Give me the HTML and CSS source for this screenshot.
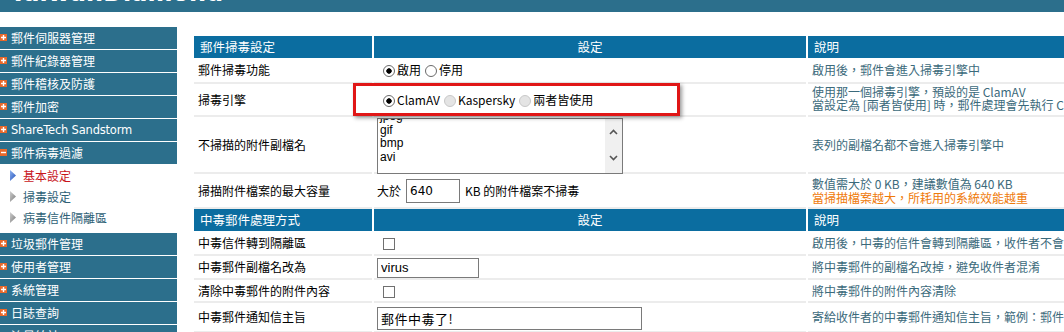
FILE: index.html
```html
<!DOCTYPE html>
<html lang="zh-Hant">
<head>
<meta charset="utf-8">
<title>郵件病毒過濾 - 基本設定</title>
<link rel="stylesheet" href="styles.css">
</head>
<body>
<div class="topbar"><div class="brand">TaiwanDiamond</div></div>
<div class="layout">
  <nav class="sidebar">
    <div class="menu-item"><svg class="ico" width="7" height="7" viewBox="0 0 7 7"><rect width="7" height="7" fill="#e8692b"/><path d="M1 3.5H6M3.5 1V6" stroke="#fff" stroke-width="1.4"/></svg><span>郵件伺服器管理</span></div>
    <div class="menu-item"><svg class="ico" width="7" height="7" viewBox="0 0 7 7"><rect width="7" height="7" fill="#e8692b"/><path d="M1 3.5H6M3.5 1V6" stroke="#fff" stroke-width="1.4"/></svg><span>郵件紀錄器管理</span></div>
    <div class="menu-item"><svg class="ico" width="7" height="7" viewBox="0 0 7 7"><rect width="7" height="7" fill="#e8692b"/><path d="M1 3.5H6M3.5 1V6" stroke="#fff" stroke-width="1.4"/></svg><span>郵件稽核及防護</span></div>
    <div class="menu-item"><svg class="ico" width="7" height="7" viewBox="0 0 7 7"><rect width="7" height="7" fill="#e8692b"/><path d="M1 3.5H6M3.5 1V6" stroke="#fff" stroke-width="1.4"/></svg><span>郵件加密</span></div>
    <div class="menu-item"><svg class="ico" width="7" height="7" viewBox="0 0 7 7"><rect width="7" height="7" fill="#e8692b"/><path d="M1 3.5H6M3.5 1V6" stroke="#fff" stroke-width="1.4"/></svg><span class="latin">ShareTech Sandstorm</span></div>
    <div class="menu-item"><svg class="ico" width="7" height="7" viewBox="0 0 7 7"><rect width="7" height="7" fill="#e8692b"/><path d="M1 3.5H6" stroke="#fff" stroke-width="1.4"/></svg><span>郵件病毒過濾</span></div>
    <ul class="submenu">
      <li class="sub active"><svg class="tri" width="6" height="11" viewBox="0 0 6 11"><defs><linearGradient id="gb" x1="0" y1="0" x2="1" y2="1"><stop offset="0" stop-color="#8fb3f0"/><stop offset="1" stop-color="#1f4fb8"/></linearGradient></defs><polygon points="0,0 6,5.5 0,11" fill="url(#gb)"/></svg><span>基本設定</span></li>
      <li class="sub"><svg class="tri" width="6" height="11" viewBox="0 0 6 11"><defs><linearGradient id="gg" x1="0" y1="0" x2="1" y2="1"><stop offset="0" stop-color="#d0d0d0"/><stop offset="1" stop-color="#7a7a7a"/></linearGradient></defs><polygon points="0,0 6,5.5 0,11" fill="url(#gg)"/></svg><span>掃毒設定</span></li>
      <li class="sub"><svg class="tri" width="6" height="11" viewBox="0 0 6 11"><polygon points="0,0 6,5.5 0,11" fill="url(#gg)"/></svg><span>病毒信件隔離區</span></li>
    </ul>
    <div class="menu-item"><svg class="ico" width="7" height="7" viewBox="0 0 7 7"><rect width="7" height="7" fill="#e8692b"/><path d="M1 3.5H6M3.5 1V6" stroke="#fff" stroke-width="1.4"/></svg><span>垃圾郵件管理</span></div>
    <div class="menu-item"><svg class="ico" width="7" height="7" viewBox="0 0 7 7"><rect width="7" height="7" fill="#e8692b"/><path d="M1 3.5H6M3.5 1V6" stroke="#fff" stroke-width="1.4"/></svg><span>使用者管理</span></div>
    <div class="menu-item"><svg class="ico" width="7" height="7" viewBox="0 0 7 7"><rect width="7" height="7" fill="#e8692b"/><path d="M1 3.5H6M3.5 1V6" stroke="#fff" stroke-width="1.4"/></svg><span>系統管理</span></div>
    <div class="menu-item"><svg class="ico" width="7" height="7" viewBox="0 0 7 7"><rect width="7" height="7" fill="#e8692b"/><path d="M1 3.5H6M3.5 1V6" stroke="#fff" stroke-width="1.4"/></svg><span>日誌查詢</span></div>
    <div class="menu-item"><svg class="ico" width="7" height="7" viewBox="0 0 7 7"><rect width="7" height="7" fill="#e8692b"/><path d="M1 3.5H6M3.5 1V6" stroke="#fff" stroke-width="1.4"/></svg><span>流量統計</span></div>
  </nav>

  <main class="content">
    <div class="cfg">
      <div class="th th-left">郵件掃毒設定</div>
      <div class="th th-center">設定</div>
      <div class="th th-left">說明</div>

      <div class="c lbl">郵件掃毒功能</div>
      <div class="c set"><input class="radio first" type="radio" name="scan" checked><span>啟用</span><input class="radio" type="radio" name="scan"><span>停用</span></div>
      <div class="c desc"><span>啟用後，郵件會進入掃毒引擎中</span></div>

      <div class="c lbl">掃毒引擎</div>
      <div class="c set rel"><input class="radio first" type="radio" name="eng" checked><span>ClamAV</span><input class="radio" type="radio" name="eng" disabled><span>Kaspersky</span><input class="radio" type="radio" name="eng" disabled><span>兩者皆使用</span><div class="highlight"></div></div>
      <div class="c desc tight"><span>使用那一個掃毒引擎，預設的是 ClamAV</span><span>當設定為 [兩者皆使用] 時，郵件處理會先執行 ClamAV 再執行 Kaspersky</span></div>

      <div class="c lbl">不掃描的附件副檔名</div>
      <div class="c set">
        <div class="ta">
          <div class="ta-text"><div>jpeg</div><div>gif</div><div>bmp</div><div>avi</div></div>
          <div class="ta-bar">
            <svg width="9" height="6" viewBox="0 0 9 6"><polyline points="1,5 4.5,1.5 8,5" fill="none" stroke="#555" stroke-width="1.6"/></svg>
            <svg width="9" height="6" viewBox="0 0 9 6"><polyline points="1,1 4.5,4.5 8,1" fill="none" stroke="#555" stroke-width="1.6"/></svg>
          </div>
        </div>
      </div>
      <div class="c desc"><span>表列的副檔名都不會進入掃毒引擎中</span></div>

      <div class="c lbl">掃描附件檔案的最大容量</div>
      <div class="c set"><span>大於</span><input class="inp inp-size" type="text" value="640"><span>KB 的附件檔案不掃毒</span></div>
      <div class="c desc loose"><span>數值需大於 0 KB，建議數值為 640 KB</span><span class="warn">當掃描檔案越大，所耗用的系統效能越重</span></div>

      <div class="th th-left">中毒郵件處理方式</div>
      <div class="th th-center">設定</div>
      <div class="th th-left">說明</div>

      <div class="c lbl">中毒信件轉到隔離區</div>
      <div class="c set"><input class="chk" type="checkbox"></div>
      <div class="c desc"><span>啟用後，中毒的信件會轉到隔離區，收件者不會收到該信件</span></div>

      <div class="c lbl">中毒郵件副檔名改為</div>
      <div class="c set"><input class="inp inp-ext" type="text" value="virus"></div>
      <div class="c desc"><span>將中毒郵件的副檔名改掉，避免收件者混淆</span></div>

      <div class="c lbl">清除中毒郵件的附件內容</div>
      <div class="c set"><input class="chk" type="checkbox"></div>
      <div class="c desc"><span>將中毒郵件的附件內容清除</span></div>

      <div class="c lbl">中毒郵件通知信主旨</div>
      <div class="c set"><input class="inp inp-subj" type="text" value="郵件中毒了!"></div>
      <div class="c desc"><span>寄給收件者的中毒郵件通知信主旨，範例：郵件中毒了!</span></div>
    </div>
  </main>
</div>
</body>
</html>
```

FILE: styles.css
```css
html, body {
  margin: 0;
  padding: 0;
}
body {
  width: 1064px;
  height: 332px;
  overflow: hidden;
  background: #fff;
  font-family: "Noto Sans CJK TC", "Noto Sans", sans-serif;
  font-size: 12px;
  color: #000;
}

/* top bar */
.topbar {
  height: 12px;
  background: #2c6f8c;
  overflow: hidden;
}
.brand {
  margin-top: -19px;
  padding-left: 10px;
  font-family: "DejaVu Sans", sans-serif;
  font-weight: bold;
  font-size: 24px;
  line-height: 24px;
  color: #fff;
  white-space: nowrap;
}

.layout {
  display: flex;
  align-items: flex-start;
}

/* sidebar */
.sidebar {
  width: 177px;
  flex: none;
  margin-top: 15px;
}
.menu-item {
  height: 22px;
  margin-bottom: 1px;
  background: #2c6f8c;
  color: #fff;
  display: flex;
  align-items: center;
  line-height: 14px;
  white-space: nowrap;
}
.menu-item .ico {
  flex: none;
  margin: -2px 4px 0 0;
}
.menu-item .latin {
  font-family: "DejaVu Sans", sans-serif;
  font-size: 11.5px;
  letter-spacing: -0.2px;
}
.submenu {
  list-style: none;
  margin: 0 0 1px;
  padding: 0 0 4px;
}
.sub {
  height: 21px;
  display: flex;
  align-items: center;
  padding-left: 10px;
  color: #2e6176;
  line-height: 14px;
  white-space: nowrap;
}
.sub .tri {
  flex: none;
  margin-right: 7px;
}
.sub.active {
  color: #c8151b;
}

/* main config grid */
.content {
  margin-left: 17px;
  margin-top: 24px;
}
.cfg {
  display: grid;
  grid-template-columns: 178px 432px 600px;
  grid-template-rows: 22px 26px 33px 57px 35px 22px 25px 24px 23px 30px;
  column-gap: 2px;
}
.th {
  background: #0b6da0;
  color: #fff;
  display: flex;
  align-items: center;
  font-size: 12.5px;
  line-height: 14px;
  white-space: nowrap;
}
.th-left {
  padding-left: 6px;
}
.th-center {
  justify-content: center;
}
.c {
  display: flex;
  align-items: center;
  box-sizing: border-box;
  border-bottom: 2px solid #ececec;
  line-height: 14px;
  white-space: nowrap;
}
.lbl {
  padding-left: 4px;
}
.set {
  padding-left: 3px;
}
.rel {
  position: relative;
}
.desc {
  padding-left: 4px;
  color: #3b6a7b;
  flex-direction: column;
  align-items: flex-start;
  justify-content: center;
  overflow: hidden;
}
.desc.tight {
  line-height: 13px;
  padding-bottom: 4px;
}
.desc.loose {
  line-height: 14px;
}
.warn {
  color: #ef7a0a;
}

/* radios */
.radio {
  appearance: none;
  -webkit-appearance: none;
  box-sizing: border-box;
  width: 12px;
  height: 12px;
  margin: 2px 2px 0 4px;
  border: 1px solid #6a6a6a;
  border-radius: 50%;
  background: #fff;
  flex: none;
}
.radio.first {
  margin-left: 6px;
}
.radio:checked {
  background: radial-gradient(circle, #000 0, #000 2.4px, #fff 3px);
}
.radio:disabled {
  border-color: #c8c8c8;
  background: #e4e4e4;
}

/* checkbox */
.chk {
  appearance: none;
  -webkit-appearance: none;
  box-sizing: border-box;
  width: 12px;
  height: 12px;
  margin: 2px 0 0 6px;
  border: 1px solid #707070;
  background: #fff;
  flex: none;
}

/* highlight annotation */
.highlight {
  position: absolute;
  left: -21px;
  top: -1px;
  width: 327px;
  height: 33px;
  box-sizing: border-box;
  border: 3px solid #e01616;
  box-shadow: 2px 2px 4px rgba(0, 0, 0, 0.4);
  pointer-events: none;
}

/* list box */
.ta {
  width: 246px;
  height: 56px;
  box-sizing: border-box;
  border: 1px solid #7a7a7a;
  display: flex;
  overflow: hidden;
  background: #fff;
  margin-top: 1px;
  align-self: flex-start;
}
.ta-text {
  flex: 1;
  margin-top: -9px;
  padding-left: 2px;
  font-family: "Liberation Sans", Arial, sans-serif;
  font-size: 12px;
  line-height: 13.5px;
  color: #000;
}
.ta-bar {
  width: 17px;
  flex: none;
  background: #f0f0f0;
  display: flex;
  flex-direction: column;
  align-items: center;
  justify-content: space-between;
  padding: 10px 0 12px;
  box-sizing: border-box;
}
.ta-bar svg {
  display: block;
}

/* text inputs */
.inp {
  box-sizing: border-box;
  border: 1px solid #7a7a7a;
  border-radius: 0;
  background: #fff;
  color: #000;
  outline: none;
  padding: 0 3px;
  margin: 0;
}
.inp-size {
  width: 54px;
  height: 24px;
  margin: 0 5px;
  font-family: "DejaVu Sans", sans-serif;
  font-size: 12px;
}
.inp-ext {
  width: 102px;
  height: 20px;
  margin-top: 1px;
  font-family: "Liberation Sans", Arial, sans-serif;
  font-size: 13px;
}
.inp-subj {
  width: 265px;
  height: 23px;
  margin-top: 2px;
  font-family: "Noto Sans CJK TC", sans-serif;
  font-size: 13px;
  letter-spacing: 0.5px;
}
```
